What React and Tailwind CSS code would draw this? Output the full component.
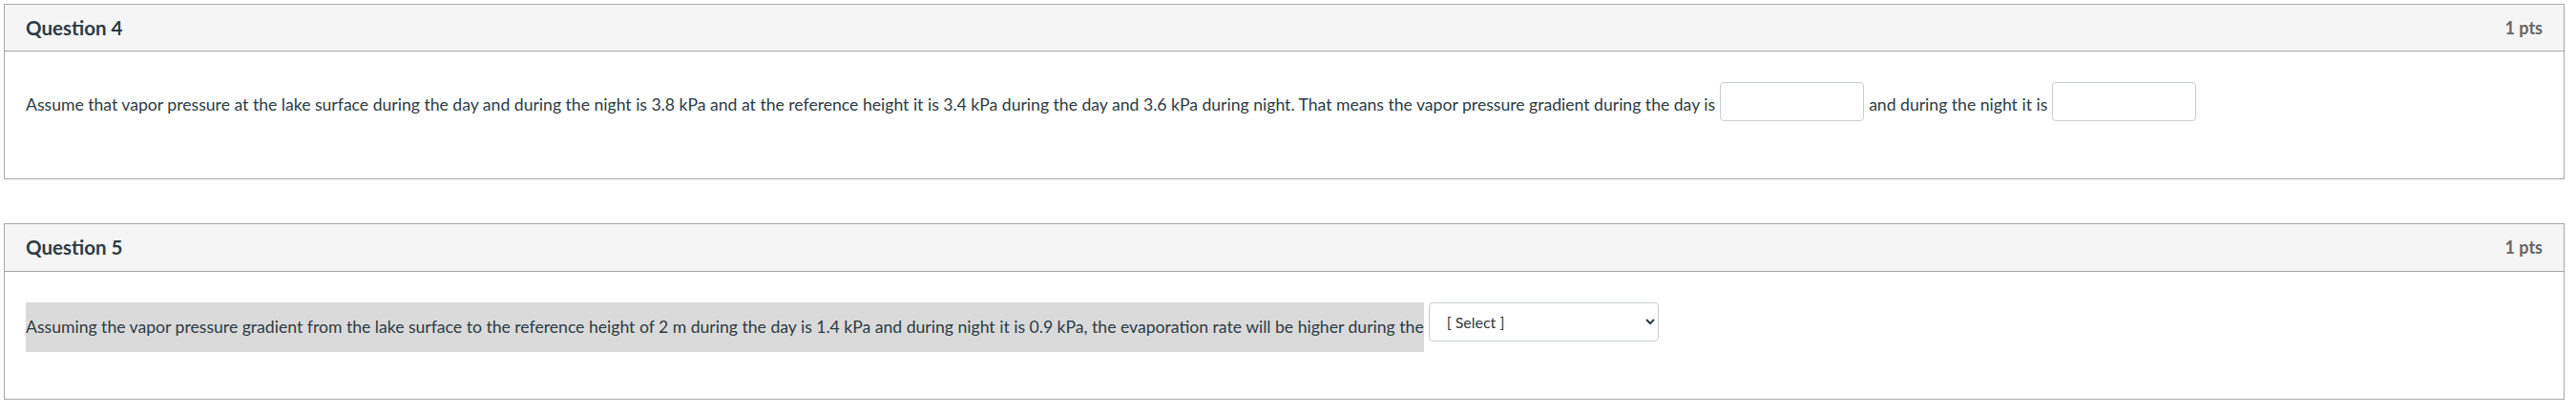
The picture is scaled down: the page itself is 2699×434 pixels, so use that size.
import React from 'react';

const font = { fontFamily: 'Lato, "Noto Sans", sans-serif' };

const QuestionBox = ({ title, points, children, headerClass }) => (
  <div className="w-[2683px] border border-[#a8a8a8] bg-white">
    <div className={`flex items-center justify-between bg-[#f5f5f5] border-b border-[#a8a8a8] px-[22px] ${headerClass}`}>
      <span className="text-[20.5px] font-bold text-[#2d3b45]">{title}</span>
      <span className="text-[18px] font-bold text-[#666666]">{points}</span>
    </div>
    <div className="h-[133px] px-[22px] pt-[32px]">{children}</div>
  </div>
);

export default function App() {
  return (
    <div className="min-h-screen bg-white pl-[4px] pt-[4px] text-[#2d3b45]" style={font}>
      <QuestionBox title="Question 4" points="1 pts" headerClass="h-[49px]">
        <div className="flex items-center text-[17.6px]">
          <span className="pt-[7px]">
            Assume that vapor pressure at the lake surface during the day and during the night is 3.8 kPa and at the
            reference height it is 3.4 kPa during the day and 3.6 kPa during night. That means the vapor pressure
            gradient during the day is
          </span>
          <input
            type="text"
            className="mx-[5px] h-[41px] w-[151px] rounded-[4px] border border-[#c7cdd1] bg-white"
          />
          <span className="pt-[7px]">and during the night it is</span>
          <input
            type="text"
            className="ml-[5px] h-[41px] w-[151px] rounded-[4px] border border-[#c7cdd1] bg-white"
          />
        </div>
      </QuestionBox>

      <div className="h-[46px]" />

      <QuestionBox title="Question 5" points="1 pts" headerClass="h-[50px]">
        <div className="flex items-start text-[17.6px]">
          <span className="flex h-[52px] items-center bg-[#dadada]">
            Assuming the vapor pressure gradient from the lake surface to the reference height of 2 m during the day is
            1.4 kPa and during night it is 0.9 kPa, the evaporation rate will be higher during the
          </span>
          <select className="ml-[5px] h-[41px] w-[241px] rounded-[4px] border border-[#c7cdd1] bg-white pl-[14px] pr-[8px] text-[16px] text-[#2d3b45]">
            <option>[ Select ]</option>
            <option>day</option>
            <option>night</option>
          </select>
        </div>
      </QuestionBox>
    </div>
  );
}
